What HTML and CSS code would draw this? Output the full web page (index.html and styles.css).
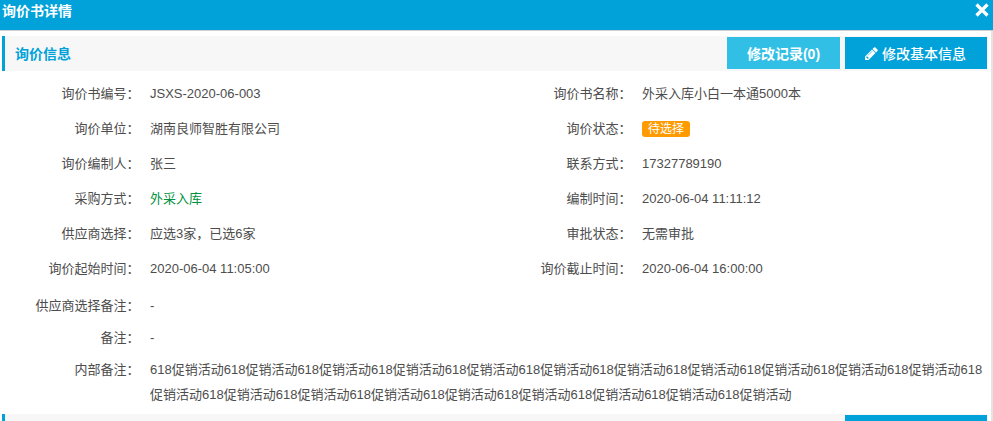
FILE: index.html
```html
<!DOCTYPE html>
<html lang="zh-CN">
<head>
<meta charset="utf-8">
<title>询价书详情</title>
<link rel="stylesheet" href="styles.css">
</head>
<body>
<div class="dialog">
  <header class="dialog-head">
    <h1 class="dialog-title">询价书详情</h1>
    <button class="close" type="button" aria-label="关闭">
      <svg viewBox="0 0 14 14" width="14" height="14"><path d="M1.5 1.5l11 11M12.5 1.5l-11 11" stroke="#fff" stroke-width="3.2" fill="none"/></svg>
    </button>
  </header>
  <main class="dialog-body">
    <section class="panel-head">
      <h2 class="panel-title">询价信息</h2>
      <div class="actions">
        <button class="btn btn-light" type="button">修改记录(0)</button>
        <button class="btn btn-main" type="button">
          <svg class="pencil" viewBox="0 0 1792 1792" width="15" height="15"><path fill="#fff" d="M491 1536l91-91-235-235-91 91v107h128v128h107zm523-928q0-22-22-22-10 0-17 7l-542 542q-7 7-7 17 0 22 22 22 10 0 17-7l542-542q7-7 7-17zm-54-192l416 416-832 832h-416v-416zm683 96q0 53-37 90l-166 166-416-416 166-165q36-38 90-38 53 0 91 38l235 234q37 39 37 91z"/></svg>
          修改基本信息
        </button>
      </div>
    </section>
    <div class="info-grid">
      <div class="field"><span class="label">询价书编号：</span><span class="value">JSXS-2020-06-003</span></div>
      <div class="field"><span class="label">询价书名称：</span><span class="value">外采入库小白一本通5000本</span></div>
      <div class="field"><span class="label">询价单位：</span><span class="value">湖南良师智胜有限公司</span></div>
      <div class="field"><span class="label">询价状态：</span><span class="value"><span class="badge">待选择</span></span></div>
      <div class="field"><span class="label">询价编制人：</span><span class="value">张三</span></div>
      <div class="field"><span class="label">联系方式：</span><span class="value">17327789190</span></div>
      <div class="field"><span class="label">采购方式：</span><span class="value value-green">外采入库</span></div>
      <div class="field"><span class="label">编制时间：</span><span class="value">2020-06-04 11:11:12</span></div>
      <div class="field"><span class="label">供应商选择：</span><span class="value">应选3家，已选6家</span></div>
      <div class="field"><span class="label">审批状态：</span><span class="value">无需审批</span></div>
      <div class="field"><span class="label">询价起始时间：</span><span class="value">2020-06-04 11:05:00</span></div>
      <div class="field"><span class="label">询价截止时间：</span><span class="value">2020-06-04 16:00:00</span></div>
    </div>
    <div class="notes">
      <div class="note"><span class="label">供应商选择备注：</span><span class="value">-</span></div>
      <div class="note"><span class="label">备注：</span><span class="value">-</span></div>
      <div class="note note-long"><span class="label">内部备注：</span><span class="value">618促销活动618促销活动618促销活动618促销活动618促销活动618促销活动618促销活动618促销活动618促销活动618促销活动618促销活动618促销活动618促销活动618促销活动618促销活动618促销活动618促销活动618促销活动618促销活动618促销活动</span></div>
    </div>
    <section class="panel-head panel-next">
      <div class="next-btn"></div>
    </section>
  </main>
</div>
</body>
</html>
```
FILE: styles.css
```css
* { box-sizing: border-box; }
html, body { margin: 0; height: 100%; overflow: hidden; background: #fff; }
body { font: 13px/25px "Liberation Sans", "Noto Sans CJK SC", sans-serif; color: #4d4d4d; }
.dialog { height: 421px; overflow: hidden; }
.dialog-head { height: 31px; background: #00a2d9; border-bottom: 1px solid #d0d0d0; display: flex; align-items: flex-start; justify-content: space-between; padding: 0 4px 0 2px; }
.dialog-title { margin: 0; font-size: 14px; line-height: 22px; font-weight: 700; color: #fff; }
.close { border: 0; background: none; padding: 0; margin-top: 3px; width: 14px; height: 14px; display: block; }
.close svg { display: block; }
.dialog-body { height: 390px; overflow: hidden; padding: 5px 0 0 2px; border-right: 2px solid #e4e4e4; }
.panel-head { height: 35px; margin-right: 3px; background: #f7f7f7; border-left: 3px solid #00a2d9; padding: 1px 1px 0 10px; display: flex; justify-content: space-between; align-items: flex-start; }
.panel-title { margin: 0; font-size: 14px; line-height: 35px; font-weight: 700; color: #00a2d9; }
.actions { display: flex; gap: 5px; }
.btn { height: 32px; border: 0; padding: 0; font: 14px "Liberation Sans", "Noto Sans CJK SC", sans-serif; color: #fff; display: flex; align-items: center; justify-content: center; }
.btn-light { width: 113px; background: #31bfe6; font-weight: 700; }
.btn-main { width: 142px; background: #00a2d9; font-weight: 500; gap: 3px; padding-right: 2px; }
.pencil { display: block; }
.info-grid { display: grid; grid-template-columns: 492px 1fr; grid-auto-rows: 35px; padding-top: 5px; }
.field { display: flex; align-items: center; }
.label { flex: none; width: 137.5px; margin-right: 10.5px; text-align: right; }
.value { display: block; min-width: 0; }
.value-green { color: #00923f; }
.badge { display: block; width: 48px; height: 16px; line-height: 16px; text-align: center; border-radius: 3px; background: #ff9a00; color: #fff; font-size: 12px; }
.notes { padding-top: 3px; }
.note { display: flex; height: 32px; align-items: center; }
.note-long { height: auto; align-items: flex-start; padding-top: 4px; margin-bottom: 7px; }
.note-long .value { flex: 1; padding-right: 5px; }
.panel-next { justify-content: flex-end; }
.next-btn { width: 142px; height: 32px; background: #00a2d9; }
```
